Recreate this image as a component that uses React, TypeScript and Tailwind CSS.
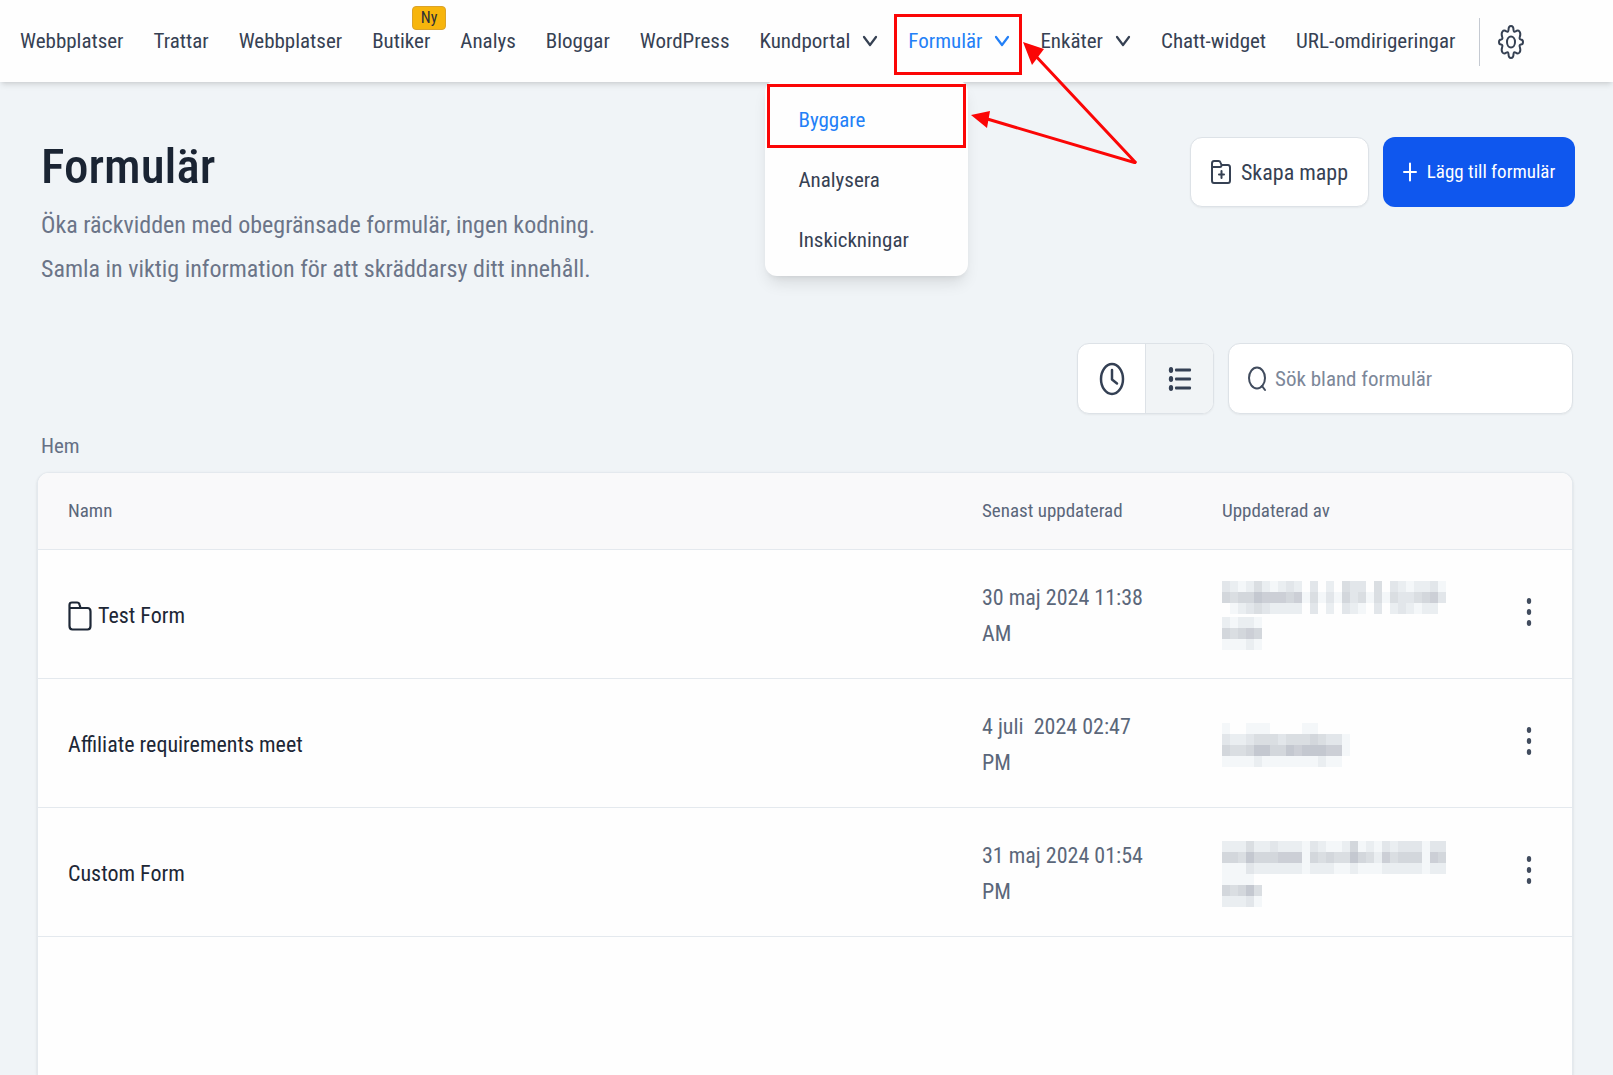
type IconProps = { className?: string };

const navItems = [
  { label: "Webbplatser" },
  { label: "Trattar" },
  { label: "Webbplatser" },
  { label: "Butiker", badge: "Ny" },
  { label: "Analys" },
  { label: "Bloggar" },
  { label: "WordPress" },
  { label: "Kundportal", menu: true },
  { label: "Formulär", menu: true, active: true },
  { label: "Enkäter", menu: true },
  { label: "Chatt-widget" },
  { label: "URL-omdirigeringar" },
];

const menuItems = ["Byggare", "Analysera", "Inskickningar"];

// Redacted names: one string per line of mosaic, one digit (shade) per tile.
const rows = [
  {
    name: "Test Form",
    folder: true,
    updated: "30 maj 2024 11:38 AM",
    mosaic: [
      "3212421232030204330403212231",
      "5455766656141315341414334563",
      "0123432222030203210302321220",
      "",
      "21221",
      "54565",
      "11121",
    ],
  },
  {
    name: "Affiliate requirements meet",
    updated: "4 juli  2024 02:47 PM",
    mosaic: ["1001110000110000", "3223444344454331", "5445775576777661", "1111211111112110"],
  },
  {
    name: "Custom Form",
    updated: "31 maj 2024 01:54 PM",
    mosaic: [
      "2224223222132112512132333133",
      "5547555666154544754264555165",
      "1113222222122211211122222122",
      "11110",
      "54574",
      "22231",
    ],
  },
];

const shades = [
  "fill-transparent",
  "fill-[#f4f7f9]",
  "fill-[#eaeef1]",
  "fill-[#e2e6ea]",
  "fill-[#dadee2]",
  "fill-[#d3d7dc]",
  "fill-[#cccfd6]",
  "fill-[#c4c8d0]",
];

function Chevron({ className }: IconProps) {
  return (
    <svg viewBox="0 0 16 14" fill="none" stroke="currentColor" strokeWidth="2.200" strokeLinecap="round" strokeLinejoin="round" className={className}>
      <path d="M2 2l6 8 6-8" />
    </svg>
  );
}

function Gear({ className }: IconProps) {
  return (
    <svg viewBox="0 0 26 34" fill="none" stroke="currentColor" strokeWidth="2" strokeLinejoin="round" className={className}>
      <ellipse cx="13" cy="17" rx="4" ry="5.500" />
      <path d="M10.500 5Q10.500 1 13 1t2.500 4q.3 2.500 2 1.500 2.500-2 4 0t.3 5.500q-.8 2.200 1 2.400Q25 14.500 25 17t-2.200 2.600q-1.800.2-1 2.400 1.200 3.500-.3 5.500t-4 0q-1.700-1-2 1.500 0 4-2.500 4t-2.500-4q-.3-2.500-2-1.500-2.500 2-4 0t-.3-5.500q.8-2.200-1-2.400Q1 19.500 1 17t2.200-2.600q1.800-.2 1-2.400Q3 8.500 4.500 6.500t4 0q1.700 1 2-1.500z" />
    </svg>
  );
}

function FolderPlus({ className }: IconProps) {
  return (
    <svg viewBox="0 0 20 24" fill="none" stroke="currentColor" strokeWidth="2" strokeLinecap="round" strokeLinejoin="round" className={className}>
      <path d="M1 7V3.500Q1 1 3 1h4.500Q9 1 9.500 2.500L10.500 5H17q2 0 2 2.500v13q0 2.500-2 2.500H3q-2 0-2-2.500V7h8q1.500 0 1.500-2M10.500 11v7M8 14.500h5" />
    </svg>
  );
}

function Folder({ className }: IconProps) {
  return (
    <svg viewBox="0 0 24 30" fill="none" stroke="currentColor" strokeWidth="2.200" strokeLinecap="round" strokeLinejoin="round" className={className}>
      <path d="M1.500 7V4q0-2.500 2.500-2.500h5q2 0 2.500 2L12.500 7h-11v18q0 3.500 3 3.500h15q3 0 3-3.500V10.500q0-3.500-3-3.500h-8" />
    </svg>
  );
}

function Plus({ className }: IconProps) {
  return (
    <svg viewBox="0 0 14 20" fill="none" stroke="currentColor" strokeWidth="2" strokeLinecap="round" className={className}>
      <path d="M7 1.500v17M1 10h12" />
    </svg>
  );
}

function Clock({ className }: IconProps) {
  return (
    <svg viewBox="0 0 26 34" fill="none" stroke="currentColor" strokeWidth="2.500" strokeLinecap="round" strokeLinejoin="round" className={className}>
      <ellipse cx="13" cy="17" rx="11" ry="15" />
      <path d="M13 8v9.500l5 4" />
    </svg>
  );
}

function List({ className }: IconProps) {
  return (
    <svg viewBox="0 0 24 26" fill="currentColor" className={className}>
      {[4, 13, 22].map((y) => (
        <g key={y}>
          <ellipse cx="3" cy={y} rx="2.200" ry="3" />
          <rect x="7" y={y - 1.5} width="16" height="3" rx="1" />
        </g>
      ))}
    </svg>
  );
}

function Search({ className }: IconProps) {
  return (
    <svg viewBox="0 0 20 26" fill="none" stroke="currentColor" strokeWidth="2" strokeLinecap="round" className={className}>
      <ellipse cx="10" cy="12" rx="8" ry="10.500" />
      <path d="M15 20l3 4" />
    </svg>
  );
}

function Dots({ className }: IconProps) {
  return (
    <svg viewBox="0 0 6 28" fill="currentColor" className={className}>
      {[3, 14, 25].map((y) => (
        <ellipse key={y} cx="3" cy={y} rx="2.200" ry="3" />
      ))}
    </svg>
  );
}

function Arrows({ className }: IconProps) {
  return (
    <svg viewBox="0 0 168 124" fill="none" stroke="currentColor" strokeWidth="3" className={className}>
      <path d="M62 12L166 123L14 78" strokeLinejoin="bevel" />
      <path d="M53 2l9 23 12-16zM1 75l19-4-3 17z" fill="currentColor" stroke="none" />
    </svg>
  );
}

function Mosaic({ lines }: { lines: string[] }) {
  const height = lines.length * 11 - (lines.includes("") ? 8 : 0);
  let y = 0;
  return (
    <svg width={224} height={height} shapeRendering="crispEdges" aria-hidden="true">
      {lines.map((line, row) => {
        const top = y;
        y += line === "" ? 3 : 11;
        return line.split("").map((shade, col) => (
          <rect key={`${row}-${col}`} x={col * 8} y={top} width={8} height={11} className={shades[Number(shade)]} />
        ));
      })}
    </svg>
  );
}

function FormsMenu() {
  return (
    <div className="absolute right-[42px] top-[54px] z-10 w-[203px] rounded-xl bg-[#fefefe] pt-1 pb-1.5 shadow-lg">
      <ul className="flex flex-col px-0.5">
        {menuItems.map((item, i) => (
          <li key={item}>
            <a
              href="#"
              className={
                i === 0
                  ? "mb-0.5 flex h-16 items-center border-3 border-[#fb0606] px-7 pt-2 text-[#2380f7]"
                  : "flex h-15 items-center px-[31px]"
              }
            >
              {item}
            </a>
          </li>
        ))}
      </ul>
    </div>
  );
}

function Navbar() {
  return (
    <nav className="relative z-10 flex h-[82px] items-center bg-[#fefefe] pl-5 pt-0.5 text-[21px] text-[#364153] shadow-md">
      <ul className="flex items-center gap-[30px] whitespace-nowrap">
        {navItems.map((item, i) => (
          <li key={i} className="relative">
            {item.menu ? (
              <button type="button" className={item.active ? "flex items-center gap-3 text-[#2380f7]" : "flex items-center gap-3"}>
                {item.label}
                <Chevron className="h-3.5 w-4" />
              </button>
            ) : (
              <a href="#">{item.label}</a>
            )}
            {item.badge && (
              <span className="absolute -right-4 -top-5 flex h-6 items-center rounded-sm border border-[#dba32a] bg-[#f7b50c] px-2 text-base text-[#2c2f36]">
                {item.badge}
              </span>
            )}
            {item.active && (
              <>
                <FormsMenu />
                <span className="pointer-events-none absolute -left-3.5 -right-3 -top-3 h-[61px] border-3 border-[#fb0606]" />
                <Arrows className="pointer-events-none absolute left-[62px] top-3.5 z-20 h-[124px] w-[168px] text-[#fb0606]" />
              </>
            )}
          </li>
        ))}
      </ul>
      <div className="ml-6 h-12 w-px bg-[#c5cad2]" />
      <button type="button" aria-label="Inställningar" className="ml-[18px]">
        <Gear className="h-[34px] w-[26px]" />
      </button>
    </nav>
  );
}

function Toolbar() {
  return (
    <div className="flex justify-end gap-3.5">
      <div className="flex h-[71px] w-[137px] overflow-hidden rounded-xl border border-[#dde2e7] bg-white text-[#344054] shadow-xs">
        <button type="button" aria-label="Senaste" className="flex flex-1 items-center justify-center">
          <Clock className="h-[34px] w-[26px]" />
        </button>
        <button type="button" aria-label="Lista" className="flex flex-1 items-center justify-center border-l border-[#dde2e7] bg-[#f1f4f6]">
          <List className="h-[26px] w-6" />
        </button>
      </div>
      <label className="flex h-[71px] w-[345px] items-center gap-2 rounded-xl border border-[#dde2e7] bg-white px-[18px] text-[#414c5e] shadow-xs">
        <Search className="h-[26px] w-5 shrink-0" />
        <input
          type="text"
          aria-label="Sök bland formulär"
          placeholder="Sök bland formulär"
          className="min-w-0 flex-1 pt-0.5 text-[21px] outline-none placeholder:text-[#7c8799]"
        />
      </label>
    </div>
  );
}

function FormsTable() {
  return (
    <div className="flex-1 overflow-hidden rounded-t-xl border border-b-0 border-[#e4e9ee] bg-[#fefefe] shadow-sm">
      <table className="w-full table-fixed text-left">
        <thead>
          <tr className="h-[76px] border-b border-[#e4e9ee] bg-[#f9f9fa] text-[19px] text-[#5b677a]">
            <th className="px-[30px] font-normal">Namn</th>
            <th className="w-60 px-[30px] font-normal">Senast uppdaterad</th>
            <th className="w-[294px] px-[30px] font-normal">Uppdaterad av</th>
            <th className="w-[86px]" aria-label="Åtgärder" />
          </tr>
        </thead>
        <tbody>
          {rows.map((row) => (
            <tr key={row.name} className="h-[129px] border-b border-[#e4e9ee]">
              <td className="px-[30px] pt-1 text-[22px] text-[#1d2736]">
                <div className="flex items-center gap-1.5">
                  {row.folder && <Folder className="h-[30px] w-6" />}
                  {row.name}
                </div>
              </td>
              <td className="whitespace-pre-wrap px-[30px] pt-1 text-[22px] leading-9 text-[#5b677a]">{row.updated}</td>
              <td className="px-[30px] pt-1">
                <Mosaic lines={row.mosaic} />
              </td>
              <td className="pb-1 text-center">
                <button type="button" aria-label="Fler val" className="align-middle text-[#414c5e]">
                  <Dots className="h-7 w-1.5" />
                </button>
              </td>
            </tr>
          ))}
        </tbody>
      </table>
    </div>
  );
}

export default function App() {
  return (
    <div className="flex min-h-screen flex-col bg-[#f0f4f7] font-['Roboto_Condensed',Roboto,sans-serif]">
      <Navbar />
      <main className="flex flex-1 flex-col pl-[37px] pr-10 pt-[55px]">
        <header className="-mr-0.5 flex items-start justify-between pl-1">
          <div>
            <h1 className="text-[49px] leading-[60px] font-medium text-[#1a2433]">Formulär</h1>
            <p className="mt-1.5 text-2xl leading-[44px] text-[#6b7488]">
              Öka räckvidden med obegränsade formulär, ingen kodning.
              <br />
              Samla in viktig information för att skräddarsy ditt innehåll.
            </p>
          </div>
          <div className="flex gap-3.5">
            <button type="button" className="flex h-[70px] w-[179px] items-center justify-center gap-2.5 rounded-xl border border-[#dde2e7] bg-white text-[22px] text-[#364153] shadow-xs">
              <FolderPlus className="h-6 w-5" />
              Skapa mapp
            </button>
            <button type="button" className="flex h-[70px] w-[192px] items-center justify-center gap-2.5 rounded-xl bg-[#0f57ee] text-[19px] text-white">
              <Plus className="h-5 w-3.5" />
              Lägg till formulär
            </button>
          </div>
        </header>
        <div className="mt-13">
          <Toolbar />
        </div>
        <a href="#" className="mt-4 mb-2.5 self-start pl-1 text-[21px] leading-8 text-[#667085]">
          Hem
        </a>
        <FormsTable />
      </main>
    </div>
  );
}
